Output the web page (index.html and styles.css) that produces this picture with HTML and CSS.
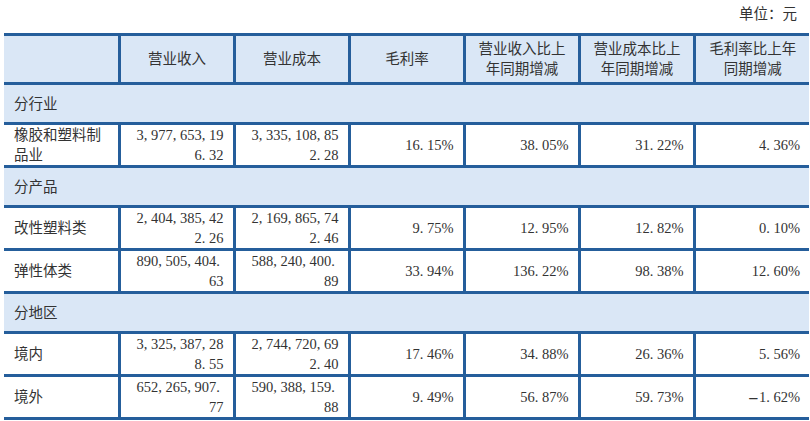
FILE: index.html
```html
<!DOCTYPE html>
<html lang="zh-CN">
<head>
<meta charset="utf-8">
<title>营业收入构成</title>
<link rel="stylesheet" href="styles.css">
</head>
<body>
<div class="page">
  <div class="unit">单位：元</div>
  <table class="report">
    <colgroup>
      <col><col><col><col><col><col><col>
    </colgroup>
    <thead>
      <tr class="head">
        <th></th>
        <th>营业收入</th>
        <th>营业成本</th>
        <th>毛利率</th>
        <th>营业收入比上年同期增减</th>
        <th>营业成本比上年同期增减</th>
        <th>毛利率比上年同期增减</th>
      </tr>
    </thead>
    <tbody>
      <tr class="section"><td colspan="7">分行业</td></tr>
      <tr class="data">
        <td class="name">橡胶和塑料制品业</td>
        <td class="num">3<span class="p">,</span>977<span class="p">,</span>653<span class="p">,</span>19<wbr>6<span class="p">.</span>32</td>
        <td class="num">3<span class="p">,</span>335<span class="p">,</span>108<span class="p">,</span>85<wbr>2<span class="p">.</span>28</td>
        <td class="num">16<span class="p">.</span>15%</td>
        <td class="num">38<span class="p">.</span>05%</td>
        <td class="num">31<span class="p">.</span>22%</td>
        <td class="num">4<span class="p">.</span>36%</td>
      </tr>
      <tr class="section"><td colspan="7">分产品</td></tr>
      <tr class="data">
        <td class="name">改性塑料类</td>
        <td class="num">2<span class="p">,</span>404<span class="p">,</span>385<span class="p">,</span>42<wbr>2<span class="p">.</span>26</td>
        <td class="num">2<span class="p">,</span>169<span class="p">,</span>865<span class="p">,</span>74<wbr>2<span class="p">.</span>46</td>
        <td class="num">9<span class="p">.</span>75%</td>
        <td class="num">12<span class="p">.</span>95%</td>
        <td class="num">12<span class="p">.</span>82%</td>
        <td class="num">0<span class="p">.</span>10%</td>
      </tr>
      <tr class="data">
        <td class="name">弹性体类</td>
        <td class="num">890<span class="p">,</span>505<span class="p">,</span>404<span class="p">.</span><wbr>63</td>
        <td class="num">588<span class="p">,</span>240<span class="p">,</span>400<span class="p">.</span><wbr>89</td>
        <td class="num">33<span class="p">.</span>94%</td>
        <td class="num">136<span class="p">.</span>22%</td>
        <td class="num">98<span class="p">.</span>38%</td>
        <td class="num">12<span class="p">.</span>60%</td>
      </tr>
      <tr class="section"><td colspan="7">分地区</td></tr>
      <tr class="data">
        <td class="name">境内</td>
        <td class="num">3<span class="p">,</span>325<span class="p">,</span>387<span class="p">,</span>28<wbr>8<span class="p">.</span>55</td>
        <td class="num">2<span class="p">,</span>744<span class="p">,</span>720<span class="p">,</span>69<wbr>2<span class="p">.</span>40</td>
        <td class="num">17<span class="p">.</span>46%</td>
        <td class="num">34<span class="p">.</span>88%</td>
        <td class="num">26<span class="p">.</span>36%</td>
        <td class="num">5<span class="p">.</span>56%</td>
      </tr>
      <tr class="data">
        <td class="name">境外</td>
        <td class="num">652<span class="p">,</span>265<span class="p">,</span>907<span class="p">.</span><wbr>77</td>
        <td class="num">590<span class="p">,</span>388<span class="p">,</span>159<span class="p">.</span><wbr>88</td>
        <td class="num">9<span class="p">.</span>49%</td>
        <td class="num">56<span class="p">.</span>87%</td>
        <td class="num">59<span class="p">.</span>73%</td>
        <td class="num"><span class="m">-</span>1<span class="p">.</span>62%</td>
      </tr>
    </tbody>
  </table>
</div>
</body>
</html>
```

FILE: styles.css
```css
body {
  margin: 0;
  background: #ffffff;
  color: #333333;
  font-family: "Liberation Serif", "Noto Sans CJK SC", serif;
  font-size: 14.5px;
}

.page {
  padding: 3px 0 0 4px;
}

.unit {
  height: 22px;
  line-height: 22px;
  margin-bottom: 8px;
  padding-right: 13px;
  text-align: right;
}

.report {
  border-collapse: collapse;
  table-layout: fixed;
  width: 805px;
}

.report col {
  width: 115px;
}

.report th,
.report td {
  border: 3px solid #255e9b;
  line-height: 20px;
  padding: 0 9px 0 10px;
  word-break: break-all;
}

.report th:first-child,
.report td:first-child {
  border-left: none;
}

.report th:last-child,
.report td:last-child {
  border-right: none;
}

.head th {
  background: #dae7f6;
  font-weight: normal;
  text-align: center;
  height: 46px;
}

.section td {
  background: #dae7f6;
  height: 37px;
  text-align: left;
}

.data td {
  height: 40px;
  background: #ffffff;
}

.name {
  text-align: left;
}

.num {
  text-align: right;
}

.p {
  display: inline-block;
  width: 0.5em;
  text-align: left;
}

.m {
  display: inline-block;
  width: 0.75em;
  text-align: center;
  transform: scaleX(2.2);
}
```
